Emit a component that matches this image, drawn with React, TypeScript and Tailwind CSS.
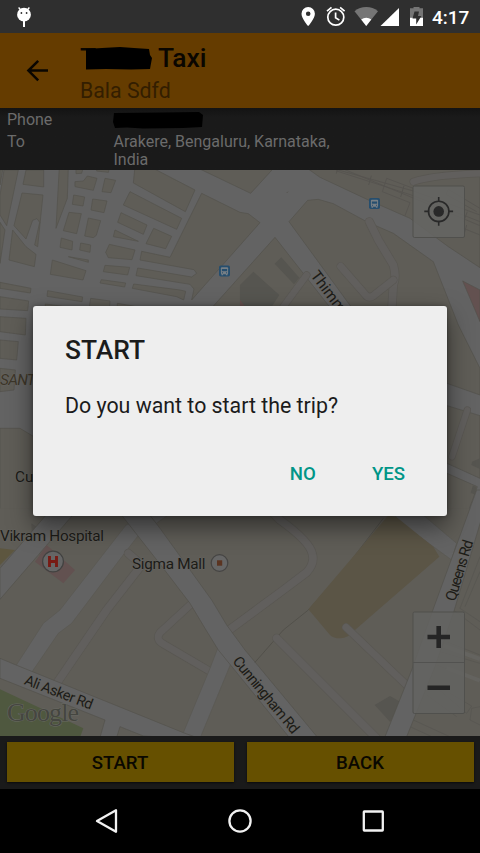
import React from "react";

const ROAD = "#636363";
const LAND = "#5f5d57";
const EDGE = "#53514c";

// Land parcels north of the dialog, in third-of-a-pixel map units.
const parcels = [
  "0,15 8,15 0,60",
  "12,15 55,15 20,182 0,150 0,90",
  "78,15 131,15 131,66 69,58",
  "66,84 129,90 113,245 104,240 119,172 111,161 98,166 78,222 42,182",
  "38,195 78,245 108,268 103,305 27,285",
  "0,172 15,195 0,295",
  "178,5 205,5 202,100 168,190",
  "228,5 250,5 245,25 228,26",
  "262,33 291,40 280,76 225,65 225,50 250,48",
  "315,40 347,46 333,83 306,80",
  "290,5 330,5 325,22 290,18",
  "221,90 254,96 249,123 217,118",
  "278,102 321,108 312,143 273,135",
  "207,142 244,146 230,206 190,197",
  "265,159 302,167 289,211 280,218 254,213",
  "184,219 218,229 216,255 180,247",
  "242,234 272,240 270,262 239,255",
  "157,285 258,317 249,345 151,328",
  "205,275 265,285 265,292",
  "0,352 93,370 91,384 0,370",
  "0,395 86,408 83,437 0,432",
  "0,455 78,460 76,510 0,500",
  "143,377 248,396 246,410 141,394",
  "272,400 330,408 328,440 266,440",
  "136,417 212,427 212,445 136,445",
  "352,415 405,424 405,440 350,440",
  "405,5 450,5 585,75 556,140 400,54",
  "390,80 545,160 530,193 370,120",
  "363,143 441,180 430,208 353,172",
  "345,195 415,229 340,215",
  "461,190 515,214 497,251 438,236",
  "328,238 405,255 396,284 325,278 317,262",
  "425,259 510,277 605,85 720,142 745,146 780,173 575,405 582,372 570,358 408,332 413,309 575,336 590,325 582,314 420,285",
  "401,357 540,375 557,379 551,405 530,395 397,370",
  "315,301 389,307 383,330 310,320",
  "304,344 377,354 374,366 300,354",
  "585,5 825,5 752,85",
  "825,217 1000,440 625,440",
  "867,170 923,106 955,103 1000,116 1100,170 1180,205 1300,290 1375,480 1440,610 1440,690 1341,655 1341,460 1080,460 1053,425",
  "915,5 1440,5 1440,308 1345,245 1230,160 1105,105 1020,65 960,37",
  "1341,722 1440,752 1440,940 1341,895",
  "1341,925 1432,965 1390,1080 1341,1080",
  "0,525 55,530 50,585 0,580",
  "0,610 46,615 42,675 0,680",
  "0,790 60,790 110,820 110,1060 0,1060",
];

const minorRoads = [
  { d: "M920,330 L850,425", w: 20 },
  { d: "M1108,170 L1135,225 L1180,300 Q1190,335 1180,360 L1175,440", w: 24 },
  { d: "M1022,304 L1097,390 Q1107,402 1122,391 L1180,345", w: 22 },
  { d: "M1240,50 Q1300,30 1440,25", w: 20 },
  { d: "M1402,735 L1356,875", w: 19 },
];

const lowerRoads = [
  { d: "M385,160 L425,195 L320,330 L170,550", w: 24 },
  { d: "M570,315 L480,398 Q465,418 490,432 L640,520", w: 22 },
  { d: "M690,388 L850,270 L920,217 Q945,190 937,162 Q930,125 840,60 L820,40", w: 24 },
  { d: "M1038,382 L1235,570", w: 22 },
  { d: "M830,415 L1130,715", w: 24 },
];

const Road = ({ d, w }: { d: string; w: number }) => (
  <g fill="none" strokeLinecap="round" strokeLinejoin="round">
    <path d={d} stroke="#595752" strokeWidth={w + 3} />
    <path d={d} stroke="#615f5d" strokeWidth={w - 1} />
  </g>
);

const BusStop = ({ x, y }: { x: number; y: number }) => (
  <g transform={`translate(${x} ${y})`}>
    <rect x="-5.5" y="-5.5" width="11" height="11" rx="1.8" fill="#264e6e" />
    <rect x="-3.6" y="-3.8" width="7.2" height="7" rx="1" fill="#777f85" />
    <rect x="-2.6" y="-2" width="5.2" height="2.2" fill="#264e6e" />
    <path d="M-2.5 1.8h1M1.5 1.8h1" stroke="#264e6e" strokeWidth="1" />
    <path d="M-3 3.6h1.6M1.4 3.6h1.6" stroke="#777f85" strokeWidth="1.2" />
  </g>
);

function MapView() {
  return (
    <svg viewBox="0 170 480 566" className="block h-[566px] w-[480px]" fontFamily="Roboto, sans-serif">
      <rect y="170" width="480" height="566" fill={ROAD} />
      <g transform="translate(0 165) scale(.333333)">
        {parcels.map((p, i) => (
          <polygon key={i} points={p} fill={LAND} stroke={EDGE} strokeWidth="2" />
        ))}
        <polygon points="1388,348 1440,375 1440,470" fill="#635150" stroke={EDGE} strokeWidth="2" />
        <path d="M720,360 L760,320 L838,390 L805,440 L720,440Z M844,277 L898,338 L882,358 L824,296Z" fill="#565550" />
        <path d="M720,405l16,20h-16z" fill="#65504f" />
        {minorRoads.map((r, i) => <Road key={i} {...r} />)}
        <g fill="none" stroke="#55534f" strokeWidth="2.4">
          <path d="M990,8 L1240,78 L1440,150 M1010,18 L1240,92 L1440,170 M1030,12 L1440,182 M1390,190 L1440,210" />
          <path d="M1013,8l-4,18M1114,32l-8,28M1212,62l-10,34M1315,106l-8,24M1402,140l-12,32M1400,180l-6,22M860,84l4-4" strokeWidth="3" />
          <path d="M1160,40 L1147,80 L1230,113 L1215,152 M1160,40 L1240,70" />
          <path d="M1345,73 L1440,130 M1338,88 L1430,140 M1345,73l-7,15" />
        </g>
        <polygon points="1416,890 1440,880 1440,912 1414,900" fill="#565550" />
        <polygon points="1418,962 1430,965 1424,988 1412,984" fill="#565550" />
      </g>
      <g transform="translate(0 500) scale(.333333)">
        <rect y="25" width="1440" height="690" fill={LAND} />
        <polygon points="0,145 45,150 0,195" fill="#5d563f" />
        <polygon points="94,70 130,95 96,105" fill="#575550" />
        <g fill={ROAD} stroke={EDGE} strokeWidth="2">
          <polygon points="500,20 378,75 180,330 130,370 48,497 95,517 175,400 215,370 362,175 412,110 540,20" stroke="#595752" />
        </g>
        {lowerRoads.slice(0, 3).map((r, i) => <Road key={i} {...r} />)}
        <g fill={ROAD} stroke={EDGE} strokeWidth="2">
          <polygon points="160,20 240,20 0,298 0,205" />
          <polygon points="655,440 630,505 550,698 545,715 600,715 695,485" stroke="#595752" />
          <polygon points="0,475 48,495 550,698 605,718 430,708 360,680 350,712 300,712 315,660 0,535" />
          <polygon points="345,20 430,20 480,85 635,300 680,375 735,450 955,715 870,715 720,530 655,450 615,385 570,310 490,205" />
          <polygon points="1180,20 1240,20 1370,130 1355,180 1190,60" stroke="#595752" />
        </g>
        <polygon points="140,135 225,210 190,250 105,185" fill="#625150" />
        <polygon points="0,568 250,685 240,712 0,712" fill="#4f583f" />
        <path d="M1150,55 L1035,205 L925,330 L850,390 L765,487" fill="none" stroke="#4c4a44" strokeWidth="2" />
        <path d="M1165,46 L1190,52 L1300,140 L1318,170 L1065,390 Q1045,415 1020,415 Q1000,415 990,405 L925,328Z" fill="#5b5546" />
        {lowerRoads.slice(3).map((r, i) => <Road key={i} {...r} />)}
        <polygon points="1170,588 1208,610 1170,665 1124,615" fill="#565550" />
        <g fill="none" stroke="#565450" strokeWidth="2">
          <path d="M1440,170 L1380,325 L1440,365 M1440,215 L1395,320 M1360,330 L1440,390 M1340,425 L1440,465 M1320,455 L1440,490 M1310,495 L1440,545 M1300,555 L1400,640 L1415,618 L1350,580 M1280,585 L1370,650 M1240,660 L1360,715 M1230,680 L1300,712 M1440,620 L1415,625 L1410,660 L1440,675" />
          <path d="M1330,437 L1440,477 M1340,504 L1440,542" stroke="#64635f" strokeWidth="12" />
        </g>
        <polygon points="1430,-30 1470,-30 1360,340 1305,500 1218,715 1153,715 1235,510 1295,340" fill={ROAD} stroke={EDGE} strokeWidth="2" />
      </g>

      <g fill="#1c1b17" fontSize="15.3" stroke="#656460" strokeWidth="1.2" paintOrder="stroke" strokeLinejoin="round">
        <text x="0" y="541" textLength="104">Vikram Hospital</text>
        <text x="132" y="569" textLength="73.5">Sigma Mall</text>
        <text x="15" y="482">Cunningham</text>
        <text x="0" y="385" fontStyle="italic" fill="#3d3629" fontSize="15.5" textLength="49">SANTHI</text>
        <text transform="translate(310 275.5) rotate(53)">Thimmaiah Rd</text>
        <text transform="translate(23.5 684) rotate(21)" textLength="72" fontSize="14.6">Ali Asker Rd</text>
        <text transform="translate(232 661.5) rotate(50.5)" textLength="95" fontSize="15">Cunningham Rd</text>
        <text transform="translate(455 602) rotate(-73)" textLength="63" fontSize="15">Queens Rd</text>
      </g>
      <circle cx="53" cy="561.5" r="10.4" fill="#666666" stroke="#424241" strokeWidth="1.2" />
      <path d="M49.5 556v11M56.5 556v11M49.5 561.5h7" stroke="#781b14" strokeWidth="2.9" />
      <circle cx="219.5" cy="563" r="8.3" fill="#666666" stroke="#454443" strokeWidth="1.2" />
      <rect x="217" y="560.3" width="5.2" height="5.4" fill="#5b3421" />
      <BusStop x={224.5} y={271} />
      <BusStop x={374.5} y={203.5} />
      <text x="7" y="720.5" fontFamily="'Liberation Serif', serif" fontSize="26" textLength="72" fill="#454640" stroke="#686963" strokeWidth="1" paintOrder="stroke">Google</text>

      <g>
        <rect x="413" y="186" width="51.5" height="51.5" rx="1.5" fill="#656563" fillOpacity=".86" stroke="#50504d" strokeWidth="1" />
        <g fill="none" stroke="#292929">
          <circle cx="438.7" cy="211.4" r="10.2" strokeWidth="1.6" />
          <path d="M438.7 197v5M438.7 220.8v5M424.3 211.4h5M448.1 211.4h5" strokeWidth="1.6" />
        </g>
        <circle cx="438.7" cy="211.4" r="5.3" fill="#292929" />
        <rect x="413" y="612" width="51.5" height="101.5" rx="1.5" fill="#636361" fillOpacity=".86" stroke="#50504d" strokeWidth="1" />
        <path d="M413 662.5h51" stroke="#525250" strokeWidth="1" />
        <path d="M427.5 637h22.5M438.7 626v22M427.5 687.7h22.5" stroke="#252525" strokeWidth="4.6" />
      </g>
    </svg>
  );
}

function StatusBar() {
  return (
    <div className="flex h-[33px] items-center bg-[#2f2f2f]">
      <svg viewBox="0 0 430 33" className="h-[33px] w-[430px] shrink-0">
        <circle cx="24" cy="14.7" r="6.9" fill="#fff" />
        <path d="M20.8 10l-2.2-2.5M27.2 10l2.2-2.5" stroke="#fff" strokeWidth="1.4" />
        <path d="M24 21v6" stroke="#fff" strokeWidth="2" />
        <circle cx="21.4" cy="13" r=".9" fill="#2f2f2f" />
        <circle cx="26.6" cy="13" r=".9" fill="#2f2f2f" />
        <path fillRule="evenodd" d="M308.2 7a6.7 6.7 0 0 0-6.7 6.7c0 5 6.7 12.4 6.7 12.4s6.7-7.4 6.7-12.4A6.7 6.7 0 0 0 308.2 7zm0 4.4a2.3 2.3 0 1 1 0 4.6 2.3 2.3 0 0 1 0-4.6z" fill="#fff" />
        <g fill="none" stroke="#fff" strokeWidth="1.7">
          <circle cx="335.8" cy="17.2" r="8" />
          <path d="M335.6 12.5v5.2l3.8 2.4M327 11.1l4.5-3.7M344.6 11.1l-4.5-3.7" />
        </g>
        <path d="M354.5 11.3a18.5 18.5 0 0 1 23.5 0L366.2 26z" fill="#757575" />
        <path d="M361.2 19.5a8 8 0 0 1 10.1 0L366.2 26z" fill="#fff" />
        <path d="M399 8v18h-18.5z" fill="#fff" />
        <path d="M410 8.2h3.5V7h6v1.2h3.5V18h-13z" fill="#757575" />
        <path d="M410 17.8h13V26h-13z" fill="#fff" />
        <path d="M419 11.5h-4.5l-2 7h3.7v6l5.2-8.5h-3.4z" fill="#2f2f2f" />
      </svg>
      <span className="ml-[2px] mt-[2px] text-[19px] font-medium leading-none text-white">4:17</span>
    </div>
  );
}

function Header() {
  return (
    <header className="flex h-[75px] bg-[#653c00]">
      <svg viewBox="0 0 80 75" className="h-[75px] w-20 shrink-0" fill="none" stroke="#0a0600" strokeWidth="2.5">
        <path d="M48 37.6H28.5M38.2 27.8l-9.8 9.8 9.8 9.8" />
      </svg>
      <div className="flex flex-col whitespace-nowrap">
        <div className="mt-2.5 flex h-8 items-center text-[26.4px] font-medium text-[#0a0600]">
          <span className="w-1.5">T</span>
          <svg viewBox="0 0 66 23" className="-mt-0.5 h-[23px] w-[66px]">
            <path d="M0 2 16 1 34 0 48 1 63 2 64 8 66 11 64 22 45 22.6 20 22 0 22.5z" fill="#000" />
          </svg>
          <span className="ml-[6px]">Taxi</span>
        </div>
        <div className="mt-[1.5px] h-7 text-[21.3px] leading-7 text-[#331e00]">Bala Sdfd</div>
      </div>
    </header>
  );
}

function TripInfo() {
  return (
    <section className="grid h-[62px] grid-cols-[106.5px_240px] content-start bg-[#1a1a1a] bg-linear-to-b from-[#131313] from-0% to-[#1a1a1a] to-15% pl-[7px] pt-[3px] text-[16px] leading-[18.4px] text-[#6b6b6b]">
      <span className="h-[22px]">Phone</span>
      <svg viewBox="0 0 90 17" className="mt-px -ml-px h-[17px] w-[90px]">
        <path d="M1 1 50 .5 86 0 90 3 89 15 70 16 30 16.5 14 15.5 2 16 0 10z" fill="#000" />
      </svg>
      <span>To</span>
      <span>Arakere, Bengaluru, Karnataka,<br />India</span>
    </section>
  );
}

function Dialog() {
  return (
    <div role="dialog" className="absolute left-[33px] top-[306px] flex h-[210px] w-[414px] flex-col rounded-[3px] bg-[#eeeeee] pl-8 pr-[42px] shadow-[0_10px_24px_rgba(0,0,0,0.5),0_0_5px_rgba(0,0,0,0.3)]">
      <h1 className="mt-7 h-8 text-[26.4px] font-medium leading-8 text-[#1b1b1b]">START</h1>
      <p className="mt-[26px] h-7 whitespace-nowrap text-[21.35px] leading-7 text-[#1b1b1b]">Do you want to start the trip?</p>
      <div className="mt-[42px] flex justify-end gap-14 text-[18.6px] font-medium leading-6 text-[#009587]">
        <button>NO</button>
        <button>YES</button>
      </div>
    </div>
  );
}

export default function App() {
  return (
    <main className="relative flex h-[853px] w-[480px] flex-col overflow-hidden bg-black font-['Roboto',sans-serif]">
      <StatusBar />
      <Header />
      <TripInfo />
      <MapView />
      <div className="flex h-[53px] gap-[13px] bg-[#1a1a1a] px-[6.5px] pb-[7px] pt-[6px] text-[18.6px] font-medium text-[#0a0800]">
        <button className="flex-1 bg-[#665000] pt-[3px] shadow-[0_1px_2px_#0a0a0a]">START</button>
        <button className="flex-1 bg-[#665000] pt-[3px] shadow-[0_1px_2px_#0a0a0a]">BACK</button>
      </div>
      <svg viewBox="0 0 480 64" className="h-16 w-[480px]" fill="none" stroke="#f2f2f2" strokeWidth="2.3" strokeLinejoin="round">
        <path d="M116 21.2v21.6L97 32z" />
        <circle cx="240" cy="32" r="10.6" />
        <rect x="363.8" y="22.5" width="19" height="19" rx=".5" />
      </svg>
      <Dialog />
    </main>
  );
}
